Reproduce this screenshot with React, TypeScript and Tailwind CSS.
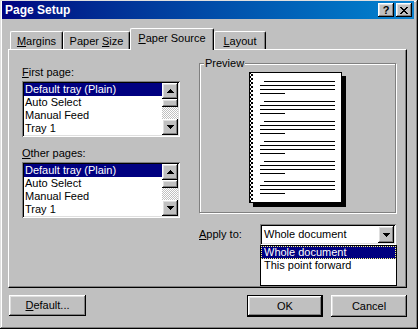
import React from "react";

const raised =
  "shadow-[inset_-1px_-1px_#000,inset_1px_1px_#fff,inset_-2px_-2px_#808080,inset_2px_2px_#dfdfdf]";
const sunken =
  "shadow-[inset_1px_1px_#808080,inset_-1px_-1px_#fff,inset_2px_2px_#000,inset_-2px_-2px_#dfdfdf]";

const trays = ["Default tray (Plain)", "Auto Select", "Manual Feed", "Tray 1"];

const UpArrow = () => (
  <svg width="7" height="4" shapeRendering="crispEdges">
    <path d="M3 0h1v1h1v1h1v1h1v1H0V3h1V2h1V1h1z" fill="#000" />
  </svg>
);

const DownArrow = () => (
  <svg width="7" height="4" shapeRendering="crispEdges">
    <path d="M0 0h7v1H6v1H5v1H4v1H3V3H2V2H1V1H0z" fill="#000" />
  </svg>
);

const closeRows = ["11000011", "01100110", "00111100", "00011000", "00111100", "01100110", "11000011"];

const CloseGlyph = () => (
  <svg width="8" height="7" shapeRendering="crispEdges">
    {closeRows.map((row, y) =>
      row.split("").map((c, x) => (c === "1" ? <rect key={`${x}-${y}`} x={x} y={y} width="1" height="1" fill="#000" /> : null))
    )}
  </svg>
);

const Key = ({ children }: { children: React.ReactNode }) => <span className="underline underline-offset-1">{children}</span>;

const TrayList = () => (
  <div className={`h-[56px] w-[158px] bg-white p-[2px] flex ${sunken}`}>
    <div className="flex-1 flex flex-col">
      {trays.map((t, i) => (
        <div key={t} className={`h-[13px] pl-[1px] whitespace-nowrap ${i === 0 ? "bg-[#000080] text-white" : ""}`}>
          {t}
        </div>
      ))}
    </div>
    <div className="w-[16px] flex flex-col">
      <div className={`h-[16px] flex items-center justify-center bg-[#c0c0c0] ${raised}`}>
        <UpArrow />
      </div>
      <div className={`h-[8px] bg-[#c0c0c0] ${raised}`} />
      <div className="flex-1 bg-[repeating-conic-gradient(#c0c0c0_0_25%,#fff_0_50%)] bg-[length:2px_2px]" />
      <div className={`h-[16px] flex items-center justify-center bg-[#c0c0c0] ${raised}`}>
        <DownArrow />
      </div>
    </div>
  </div>
);

const PagePreview = () => {
  const groups = [0, 1, 2, 3, 4, 5];
  return (
    <svg width="97" height="135" shapeRendering="crispEdges">
      <defs>
        <pattern id="chk" width="4" height="4" patternUnits="userSpaceOnUse">
          <rect width="2" height="2" fill="#000" />
          <rect x="2" y="2" width="2" height="2" fill="#000" />
        </pattern>
      </defs>
      <rect x="4" y="4" width="93" height="131" fill="#000" />
      <rect x="0.5" y="0.5" width="92" height="130" fill="#fff" stroke="#000" />
      <rect x="1" y="1" width="3" height="129" fill="url(#chk)" />
      {groups.map((g) => {
        const y = 9 + g * 20;
        return (
          <g key={g} fill="#000">
            <rect x="15" y={y} width="71" height="1" />
            <rect x="11" y={y + 4} width="75" height="1" />
            <rect x="11" y={y + 8} width="75" height="1" />
            <rect x="11" y={y + 12} width="25" height="1" />
          </g>
        );
      })}
    </svg>
  );
};

const tabs = [
  { label: "Margins", key: "M", rest: "argins", w: "w-[53px]", active: false },
  { label: "Paper Size", key: "", rest: "", w: "w-[67px]", active: false },
  { label: "Paper Source", key: "P", rest: "aper Source", w: "w-[84px]", active: true },
  { label: "Layout", key: "L", rest: "ayout", w: "w-[52px]", active: false },
];

export default function App() {
  return (
    <div className="w-[418px] h-[329px] bg-[#c0c0c0] pl-[2px] pr-[4px] pt-[1px] font-['Liberation_Sans',Arial,sans-serif] text-[11px] leading-[13px] text-black shadow-[inset_-1px_-1px_#000,inset_1px_1px_#dfdfdf,inset_-2px_-2px_#808080,inset_2px_2px_#fff]">
      {/* title bar */}
      <div className="h-[18px] flex items-center pl-[3px] pr-[2px] bg-gradient-to-r from-[#000080] to-[#1084d0]">
        <span className="text-white font-bold text-[12px] leading-[14px]">Page Setup</span>
        <div className="ml-auto flex gap-[2px]">
          <div className={`w-[16px] h-[14px] bg-[#c0c0c0] flex items-center justify-center font-bold text-[11px] leading-[11px] ${raised}`}>
            ?
          </div>
          <div className={`w-[16px] h-[14px] bg-[#c0c0c0] flex items-center justify-center ${raised}`}>
            <CloseGlyph />
          </div>
        </div>
      </div>

      <div className="pl-[6px] pr-[7px]">
        {/* tabs */}
        <div className="mt-[9px] h-[21px] flex items-end pl-[2px]">
          {tabs.map((t) => (
            <div
              key={t.label}
              className={`${t.w} ${
                t.active ? "h-[22px] -mb-[1px] relative z-10" : "h-[18px]"
              } bg-[#c0c0c0] border-l border-t border-white border-r border-r-black rounded-tl-[2px] rounded-tr-[2px] shadow-[inset_-1px_0_#808080] pt-[3px] text-center whitespace-nowrap`}
            >
              {t.label === "Paper Size" ? (
                <>
                  Paper <Key>S</Key>ize
                </>
              ) : (
                <>
                  <Key>{t.key}</Key>
                  {t.rest}
                </>
              )}
            </div>
          ))}
        </div>

        {/* panel */}
        <div className="h-[239px] border-t border-l border-white border-r border-b border-r-black border-b-black shadow-[inset_-1px_-1px_#808080] flex items-start pl-[13px] pt-[13px]">
          <div className="w-[158px] pt-[3px]">
            <div>
              <Key>F</Key>irst page:
            </div>
            <div className="mt-[2px]">
              <TrayList />
            </div>
            <div className="mt-[10px]">
              <Key>O</Key>ther pages:
            </div>
            <div className="mt-[2px]">
              <TrayList />
            </div>
          </div>

          <div className="ml-[19px] w-[197px]">
            <div className="relative h-[150px] w-[197px] border border-[#808080] shadow-[1px_1px_#fff,inset_1px_1px_#fff] flex justify-center pt-[8px]">
              <div className="absolute -top-[7px] left-[4px] px-[1px] bg-[#c0c0c0]">Preview</div>
              <PagePreview />
            </div>
            <div className="mt-[11px] flex items-center justify-between">
              <span>
                <Key>A</Key>pply to:
              </span>
              <div className="relative">
                <div className={`w-[136px] h-[21px] bg-white p-[2px] flex ${sunken}`}>
                  <div className="flex-1 pl-[2px] pt-[2px] whitespace-nowrap">Whole document</div>
                  <div className={`w-[16px] bg-[#c0c0c0] flex items-center justify-center ${raised}`}>
                    <DownArrow />
                  </div>
                </div>
                <div className="absolute top-full left-0 w-[137px] h-[41px] bg-white border border-black z-20">
                  <div className="h-[13px] bg-[#000080] text-white border border-dotted border-[#ffff80] pl-[2px] leading-[11px] whitespace-nowrap">
                    Whole document
                  </div>
                  <div className="h-[13px] pl-[3px] whitespace-nowrap">This point forward</div>
                </div>
              </div>
            </div>
          </div>
        </div>

        {/* buttons */}
        <div className="mt-[7px] flex">
          <button className={`ml-[1px] w-[77px] h-[21px] bg-[#c0c0c0] ${raised}`}>
            <Key>D</Key>efault...
          </button>
          <button className={`ml-auto w-[76px] h-[22px] bg-[#c0c0c0] border border-black ${raised}`}>OK</button>
          <button className={`ml-[8px] w-[76px] h-[22px] bg-[#c0c0c0] ${raised}`}>Cancel</button>
        </div>
      </div>
    </div>
  );
}
